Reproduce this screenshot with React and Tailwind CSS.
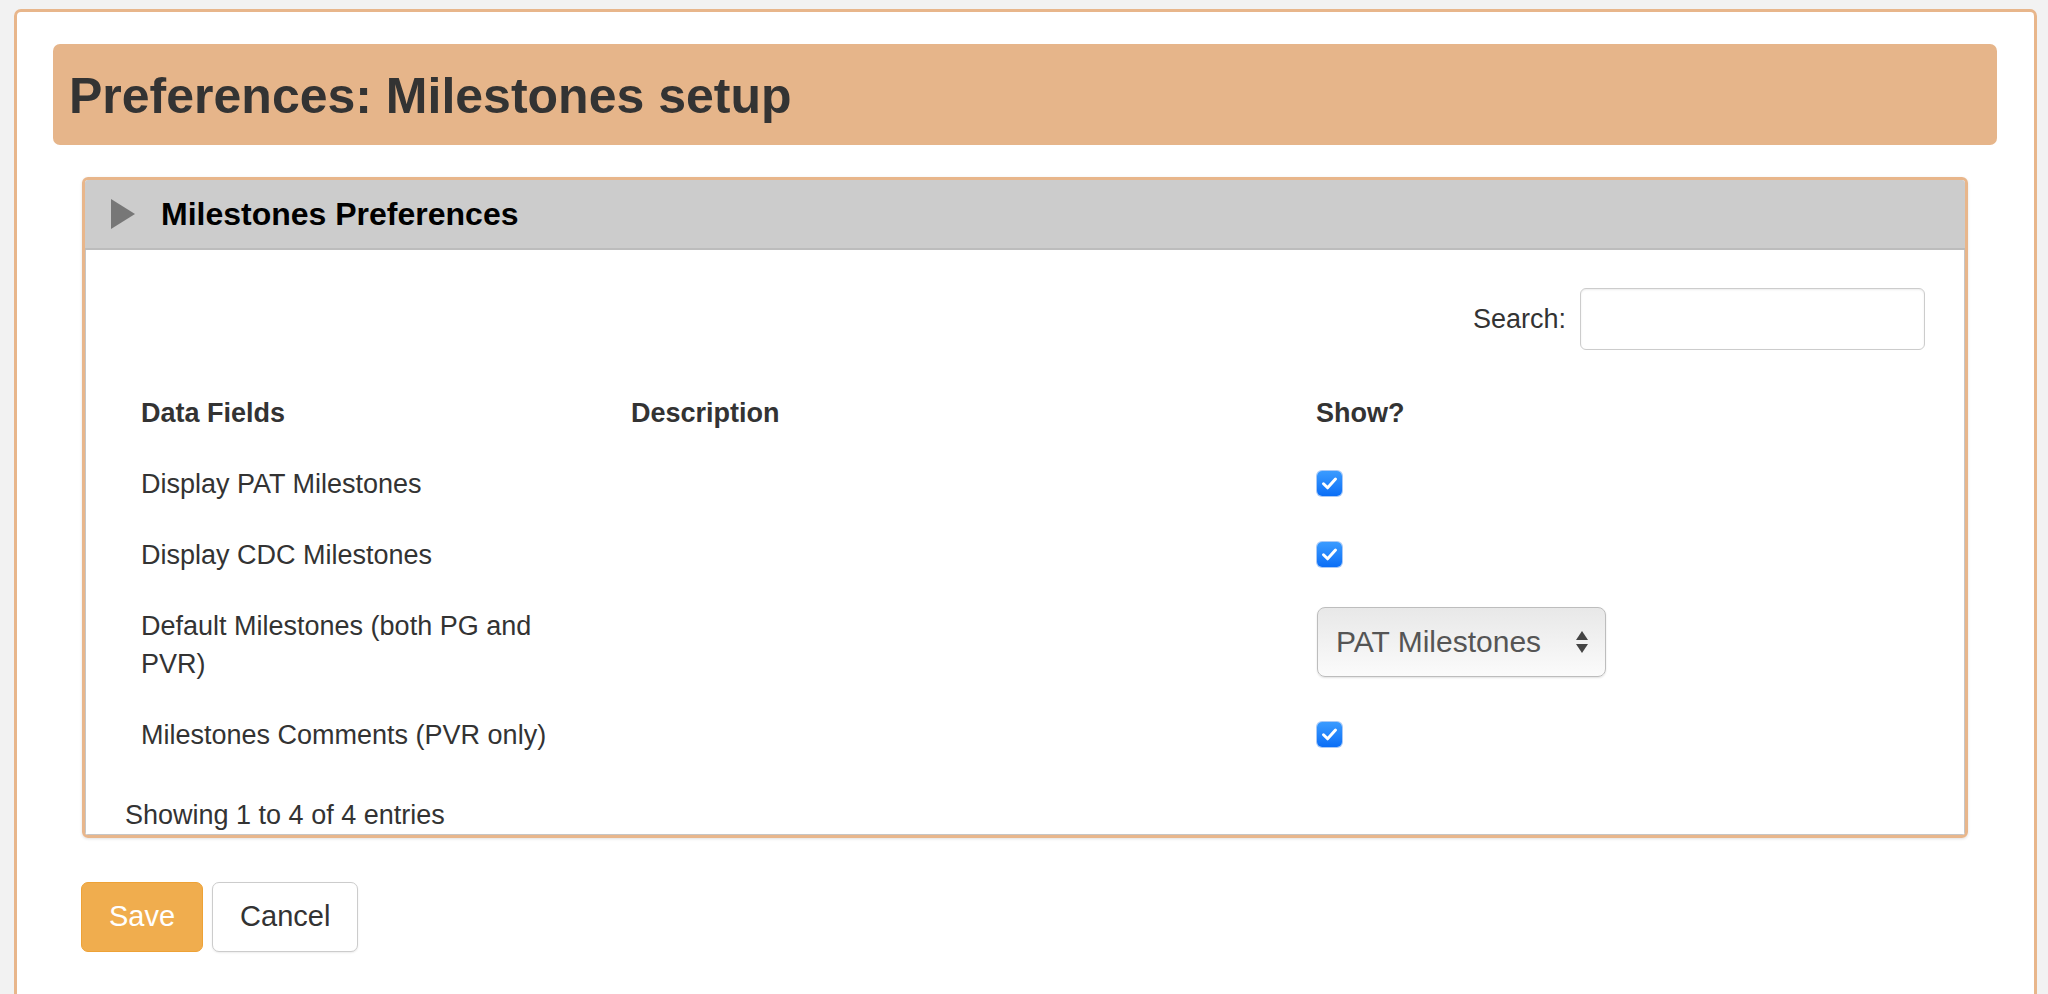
import React from "react";

const rows = [
  { field: "Display PAT Milestones", kind: "check" },
  { field: "Display CDC Milestones", kind: "check" },
  { field: "Default Milestones (both PG and PVR)", kind: "select" },
  { field: "Milestones Comments (PVR only)", kind: "check" },
];

function Checkbox() {
  return (
    <div className="w-[25px] h-[25px] rounded-[5px] bg-gradient-to-b from-[#3a9bff] to-[#0a6ef6] flex items-center justify-center shadow-[0_0_0_1px_rgba(10,100,230,0.35)]">
      <svg width="17" height="15" viewBox="0 0 17 15">
        <path d="M2.5 7.8 L6.6 11.8 L14.5 3" fill="none" stroke="#fff" strokeWidth="3" strokeLinecap="round" strokeLinejoin="round" />
      </svg>
    </div>
  );
}

function FakeSelect() {
  return (
    <div className="w-[289px] h-[70px] rounded-[8px] border border-[#bdbdbd] bg-gradient-to-b from-[#e8e8e8] to-[#fbfbfb] shadow-[0_1px_2px_rgba(0,0,0,0.12)] flex items-center justify-between pl-[18px] pr-[16px]">
      <span className="text-[30px] text-[#555] leading-none">PAT Milestones</span>
      <svg width="14" height="24" viewBox="0 0 14 24">
        <path d="M7 1 L13 10 L1 10 Z" fill="#444" />
        <path d="M1 14 L13 14 L7 23 Z" fill="#444" />
      </svg>
    </div>
  );
}

export default function App() {
  return (
    <div className="min-h-screen bg-[#f2f2f2] pt-[9px] pl-[14px] pr-[11px] font-['Liberation_Sans',Arial,sans-serif] text-[#333]">
      <div className="min-h-[1000px] bg-white border-[3px] border-[#e8b68b] rounded-t-[7px] pt-[32px] pl-[36px] pr-[37px]">
        {/* heading */}
        <div className="h-[101px] bg-[#e6b58a] rounded-[7px] flex items-center pl-[16px]">
          <h1 className="text-[50px] font-bold text-[#333] leading-none mt-[2px]">Preferences: Milestones setup</h1>
        </div>

        <div className="mx-[29px] mt-[32px]">
          {/* panel */}
          <div className="border-[3px] border-[#e8b68b] rounded-[6px] shadow-[0_1px_3px_rgba(0,0,0,0.12)] overflow-hidden">
            <div className="h-[70px] bg-[#cccccc] border-b-2 border-[#bcbcbc] flex items-center pl-[26px]">
              <svg width="24" height="30" viewBox="0 0 24 30">
                <path d="M0 0 L24 15 L0 30 Z" fill="#777" />
              </svg>
              <span className="ml-[26px] text-[32px] font-bold text-black leading-none">Milestones Preferences</span>
            </div>

            <div className="border-x border-b border-[#c6c6c6] pt-[38px] px-[39px]">
              <div className="flex justify-end items-center">
                <span className="text-[27px] mr-[14px]">Search:</span>
                <input
                  type="text"
                  className="w-[345px] h-[62px] border border-[#cccccc] rounded-[6px] shadow-[inset_0_1px_2px_rgba(0,0,0,0.08)] outline-none px-3 text-[27px]"
                />
              </div>

              <table className="mt-[27px] w-full table-fixed text-[27px] leading-[38px]">
                <colgroup>
                  <col className="w-[490px]" />
                  <col className="w-[685px]" />
                  <col />
                </colgroup>
                <thead>
                  <tr className="h-[71px] text-left">
                    <th className="px-[16px] font-bold align-middle">Data Fields</th>
                    <th className="px-[16px] font-bold align-middle">Description</th>
                    <th className="px-[16px] font-bold align-middle">Show?</th>
                  </tr>
                </thead>
                <tbody>
                  {rows.map((r) => (
                    <tr key={r.field}>
                      <td className="px-[16px] py-[16.5px] align-top">
                        <div className="max-w-[440px]">{r.field}</div>
                      </td>
                      <td className="px-[16px] py-[16.5px]"></td>
                      <td className="pl-[17px] pr-[16px] py-[16.5px] align-top">
                        {r.kind === "check" ? (
                          <div className="h-[38px] flex items-center">
                            <Checkbox />
                          </div>
                        ) : (
                          <FakeSelect />
                        )}
                      </td>
                    </tr>
                  ))}
                </tbody>
              </table>

              <div className="mt-[26px] text-[27px] leading-[38px]">Showing 1 to 4 of 4 entries</div>
            </div>
          </div>

          {/* buttons */}
          <div className="mt-[44px] flex gap-[9px] -ml-px">
            <button className="h-[70px] px-[27px] rounded-[7px] bg-[#f0ad4e] border border-[#eea236] text-white text-[29px]">
              Save
            </button>
            <button className="h-[70px] px-[27px] rounded-[7px] bg-white border border-[#cccccc] text-[#333] text-[29px] shadow-[0_1px_2px_rgba(0,0,0,0.08)]">
              Cancel
            </button>
          </div>
        </div>
      </div>
    </div>
  );
}
